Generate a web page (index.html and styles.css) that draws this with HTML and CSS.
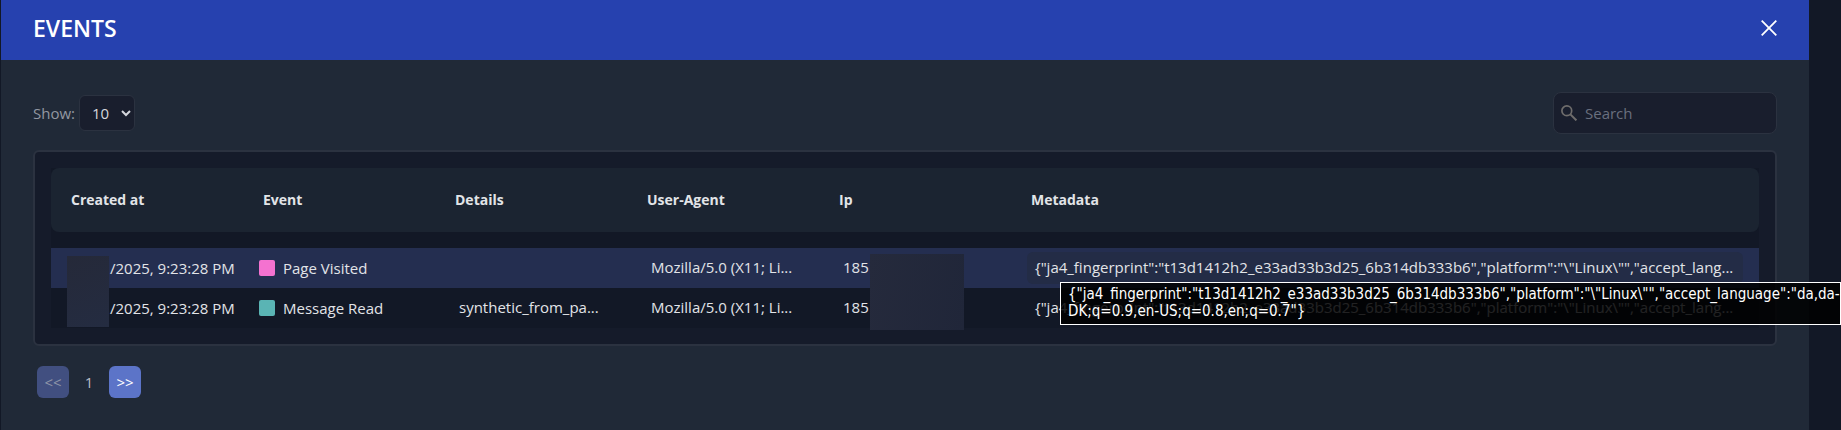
FILE: index.html
```
<!DOCTYPE html>
<html lang="en">
<head>
  <meta charset="UTF-8">
  <title>Events</title>
  <link rel="stylesheet" href="styles.css">
</head>
<body>
  <div class="modal">
    <header class="modal-header">
      <h1>EVENTS</h1>
      <button class="close-btn" type="button" aria-label="Close">
        <svg width="16" height="16" viewBox="0 0 16 16"><path d="M0.7 0.7 L15.3 15.3 M15.3 0.7 L0.7 15.3" stroke="#fff" stroke-width="1.8" fill="none"/></svg>
      </button>
    </header>

    <div class="modal-body">
      <div class="toolbar">
        <div class="show">
          <label for="pageSize">Show:</label>
          <select id="pageSize">
            <option>10</option>
            <option>25</option>
            <option>50</option>
          </select>
        </div>
        <div class="search">
          <svg width="16" height="16" viewBox="0 0 16 16"><circle cx="5.8" cy="5.8" r="4.9" stroke="#6f6d6c" stroke-width="1.7" fill="none"/><path d="M9.4 9.4 L15.4 15.4" stroke="#6f6d6c" stroke-width="2" fill="none"/></svg>
          <input type="text" placeholder="Search" aria-label="Search">
        </div>
      </div>

      <div class="table-box">
        <div class="table-wrap">
          <table>
            <thead>
              <tr><th>Created at</th><th>Event</th><th>Details</th><th>User-Agent</th><th>Ip</th><th class="meta">Metadata</th></tr>
            </thead>
            <tbody>
              <tr class="spacer"><td colspan="6"></td></tr>
              <tr class="active">
                <td class="date">/2025, 9:23:28 PM</td>
                <td><div class="event"><span class="swatch pink"></span>Page Visited</div></td>
                <td></td>
                <td><div class="chip">Mozilla/5.0 (X11; Li...</div></td>
                <td><div class="chip">185</div></td>
                <td><div class="chip hover">{"ja4_fingerprint":"t13d1412h2_e33ad33b3d25_6b314db333b6","platform":"\"Linux\"","accept_lang...</div></td>
              </tr>
              <tr>
                <td class="date">/2025, 9:23:28 PM</td>
                <td><div class="event"><span class="swatch teal"></span>Message Read</div></td>
                <td><div class="chip">synthetic_from_pa...</div></td>
                <td><div class="chip">Mozilla/5.0 (X11; Li...</div></td>
                <td><div class="chip">185</div></td>
                <td><div class="chip">{"ja4_fingerprint":"t13d1412h2_e33ad33b3d25_6b314db333b6","platform":"\"Linux\"","accept_lang...</div></td>
              </tr>
            </tbody>
          </table>
          <div class="mask mask-date"></div>
          <div class="mask mask-ip"></div>
        </div>
      </div>

      <nav class="pagination">
        <button type="button" disabled>&lt;&lt;</button>
        <span class="page">1</span>
        <button type="button">&gt;&gt;</button>
      </nav>
    </div>
  </div>

  <div class="tooltip" role="tooltip">{"ja4_fingerprint":"t13d1412h2_e33ad33b3d25_6b314db333b6","platform":"\"Linux\"","accept_language":"da,da-DK;q=0.9,en-US;q=0.8,en;q=0.7"}</div>
</body>
</html>
```
FILE: styles.css
```
* { box-sizing: border-box; }
body { background: #121826; font-family: "Open Sans", sans-serif; font-size: 15px; line-height: 22px; color: #e2e4e8; margin: 0; }

.modal { margin: 0 32px 0 1px; min-height: 100vh; background: #202937; }
.modal-header {
  display: flex;
  justify-content: space-between;
  align-items: flex-start;
  min-height: 60px;
  padding: 20px 32px;
  background: #2641af;
}
h1 { margin: 0; font-size: 23px; line-height: 16px; font-weight: 600; color: #fff; }
.close-btn { background: none; border: none; padding: 0; cursor: pointer; }
.close-btn svg { display: block; }
.modal-body { padding: 32px 32px 24px; }

.toolbar { display: flex; justify-content: space-between; align-items: center; margin-bottom: 16px; }
.show { display: flex; align-items: center; gap: 4px; color: #9297a1; }
select {
  width: 56px; height: 36px;
  padding: 0 0 0 8px;
  font: inherit;
  color: #d5d7dd;
  background: #191e2d;
  border: 1px solid #2b3240;
  border-radius: 6px;
}
.search {
  display: flex;
  align-items: center;
  gap: 8px;
  width: 224px; height: 42px;
  padding: 0 7px;
  background: #191e2d;
  border: 1px solid #2b3240;
  border-radius: 8px;
}
.search svg { flex: none; }
.search input { flex: 1; min-width: 0; padding: 0; border: none; background: none; font: inherit; color: #d5d7dd; }
.search input::placeholder { color: #696f7e; opacity: 1; }

.table-box { padding: 16px; background: #151b2a; border: 2px solid #2b3240; border-radius: 6px; }
.table-wrap { position: relative; background: #121826; }
table { width: 100%; table-layout: fixed; border-collapse: separate; border-spacing: 0; }
th { width: 192px; height: 64px; padding: 0 20px; background: #1b2431; text-align: left; font-size: 14px; font-weight: 700; }
th.meta { width: auto; }
th:first-child { border-radius: 8px 0 0 8px; }
th:last-child { border-radius: 0 8px 8px 0; }
td { height: 40px; padding: 0 16px; white-space: nowrap; }
.spacer td { height: 16px; }
.active td { background: #242e50; }
td.date { padding: 0 0 0 59px; }
.event { display: flex; align-items: center; gap: 8px; }
.swatch { width: 16px; height: 16px; border-radius: 2px; }
.pink { background: #f472d0; }
.teal { background: #5ab4b4; }
.chip { padding: 4px 8px 6px; border-radius: 6px; }
.chip.hover { background: #232c46; }

/* hides the private part of the date and ip columns */
.mask { position: absolute; }
.mask-date { left: 16px; top: 88px; width: 42px; height: 71px; background: linear-gradient(160deg, #252939, #242c41); }
.mask-ip { left: 819px; top: 86px; width: 94px; height: 76px; background: linear-gradient(100deg, #252a3c, #202639); }

.pagination { display: flex; align-items: center; gap: 8px; margin-top: 20px; padding-left: 4px; }
.pagination button { width: 32px; height: 32px; padding: 0; font: inherit; color: #fff; background: #5c74c8; border: none; border-radius: 6px; cursor: pointer; }
.pagination button:disabled { background: #414f80; color: #8e95a8; cursor: default; }
.page { width: 24px; text-align: center; color: #b9bcc3; }

.tooltip {
  position: absolute;
  top: 282px; right: 0;
  width: 781px;
  padding: 3px 0 4px 7px;
  font-family: "DejaVu Sans Condensed", "DejaVu Sans", sans-serif;
  font-size: 15px;
  line-height: 17px;
  color: #fff;
  background: rgba(0, 0, 0, 0.85);
  border: 1px solid #fff;
}
```
